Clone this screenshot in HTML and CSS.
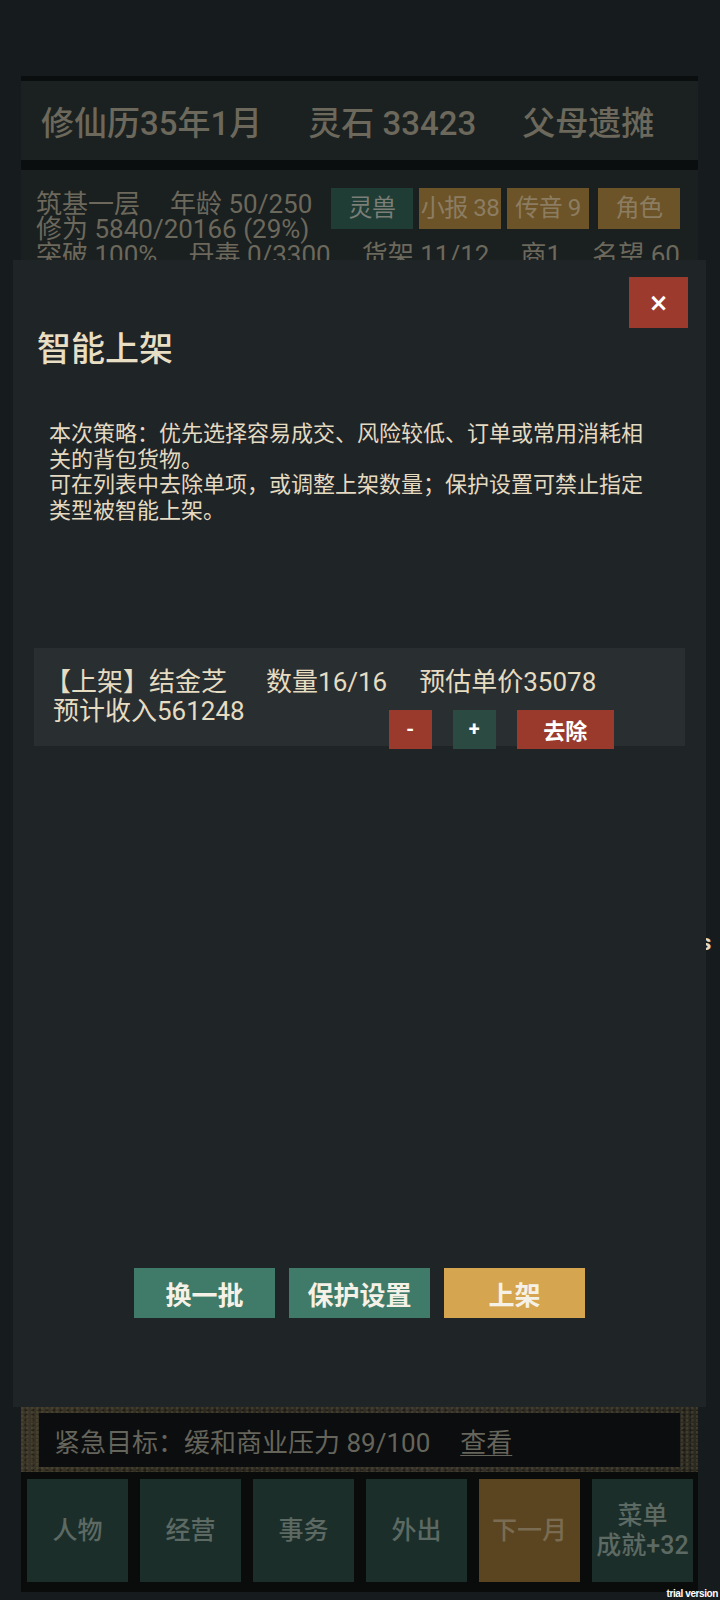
FILE: index.html
```html
<!DOCTYPE html>
<html lang="zh-CN">
  <head>
    <meta charset="UTF-8" />
    <meta name="viewport" content="width=720, initial-scale=1.0" />
    <title>智能上架</title>
    <link rel="stylesheet" href="styles.css">
  </head>
  <body>
    <div class="screen">
      <header class="top-bar">
        <span>修仙历35年1月</span>
        <span>灵石 33423</span>
        <span>父母遗摊</span>
      </header>
      <div class="top-sep"></div>

      <section class="status">
        <div class="status-top">
          <div class="status-lines">
            <div><span class="gap">筑基一层</span>年龄 50/250</div>
            <div>修为 5840/20166 (29%)</div>
          </div>
          <div class="status-btns">
            <div class="sbtn green">灵兽</div>
            <div class="sbtn brown">小报 38</div>
            <div class="sbtn brown">传音 9</div>
            <div class="sbtn brown wide-gap">角色</div>
          </div>
        </div>
        <div class="status-line3">
          <span>突破 100%</span>
          <span>丹毒 0/3300</span>
          <span>货架 11/12</span>
          <span>商1</span>
          <span>名望 60</span>
        </div>
      </section>

      <div class="goal">
        <div class="goal-inner">紧急目标：缓和商业压力 89/100<span class="goal-link">查看</span></div>
      </div>

      <nav class="nav">
        <div class="nav-btn">人物</div>
        <div class="nav-btn">经营</div>
        <div class="nav-btn">事务</div>
        <div class="nav-btn">外出</div>
        <div class="nav-btn next">下一月</div>
        <div class="nav-btn">菜单<br />成就+32</div>
      </nav>
    </div>

    <div class="stray">s</div>

    <!-- 智能上架 弹窗 -->
    <div class="modal">
      <button class="close-btn">×</button>
      <h1 class="modal-title">智能上架</h1>
      <p class="modal-desc">本次策略：优先选择容易成交、风险较低、订单或常用消耗相关的背包货物。<br />可在列表中去除单项，或调整上架数量；保护设置可禁止指定类型被智能上架。</p>

      <div class="item-list">
        <div class="item">
          <div class="item-line">
            <span class="item-part first">【上架】结金芝</span>
            <span class="item-part">数量16/16</span>
            <span>预估单价35078</span>
          </div>
          <div class="item-line second">
            <span>预计收入561248</span>
            <div class="item-btns">
              <button class="ibtn red small">-</button>
              <button class="ibtn green small">+</button>
              <button class="ibtn red">去除</button>
            </div>
          </div>
        </div>
      </div>

      <div class="modal-footer">
        <button class="fbtn green">换一批</button>
        <button class="fbtn green">保护设置</button>
        <button class="fbtn gold">上架</button>
      </div>
    </div>

    <div class="trial">trial version</div>
  </body>
</html>
```

FILE: styles.css
```css
/* Reset some default styles */
* {
  margin: 0;
  padding: 0;
  box-sizing: border-box;
}

body {
  font-family: Roboto, "Noto Sans CJK SC", sans-serif;
  background-color: #161b1e;
  width: 720px;
  height: 1600px;
  overflow: hidden;
  position: relative;
}

.screen {
  margin: 0 22px 0 21px;
  padding-top: 76px;
}

/* top bar */
.top-bar {
  height: 84px;
  border-top: 5px solid #0b0e0f;
  background-color: #1b2120;
  display: flex;
  align-items: center;
  gap: 46px;
  padding-left: 20px;
  font-size: 33px;
  font-weight: 500;
  color: #6c685c;
  white-space: nowrap;
}

.top-sep {
  height: 10px;
  background-color: #0b0e0f;
}

/* status panel (behind the modal) */
.status {
  height: 1237px;
  background-color: #1a1f1f;
  padding: 18px 18px 0 15px;
  font-size: 26px;
  line-height: 25px;
  color: #6c685c;
}

.status-top {
  display: flex;
  justify-content: space-between;
}

.status-lines {
  padding-top: 4px;
  white-space: nowrap;
}

.gap {
  margin-right: 30px;
}

.status-btns {
  display: flex;
  gap: 6px;
}

.sbtn {
  width: 82px;
  height: 41px;
  display: flex;
  align-items: center;
  justify-content: center;
  font-size: 24px;
  white-space: nowrap;
  letter-spacing: -0.5px;
}

.sbtn.green {
  background-color: #1f3c35;
  color: #7b7f78;
}

.sbtn.brown {
  background-color: #6c5428;
  color: #8c7d62;
}

.sbtn.wide-gap {
  margin-left: 3px;
}

.status-line3 {
  display: flex;
  justify-content: space-between;
  margin-top: 1px;
  white-space: nowrap;
}

/* urgent goal */
.goal {
  height: 65px;
  padding: 6px 18px 5px 18px;
  background-color: #2e2b22;
  background-image:
    radial-gradient(circle at 20% 30%, rgba(90, 80, 55, 0.45) 0 1px, transparent 2px),
    radial-gradient(circle at 70% 60%, rgba(15, 14, 10, 0.5) 0 1px, transparent 2px),
    linear-gradient(90deg, #3a3528, #2a2820 30%, #34302a 60%, #2b2a22);
  background-size: 5px 4px, 7px 5px, 100% 100%;
}

.goal-inner {
  height: 54px;
  background-color: #0b0d0e;
  display: flex;
  align-items: center;
  padding-left: 15px;
  font-size: 26px;
  color: #66655c;
  white-space: nowrap;
}

.goal-link {
  margin-left: 30px;
  text-decoration: underline;
  text-decoration-thickness: 1px;
  text-underline-offset: 3px;
}

/* bottom nav */
.nav {
  height: 120px;
  background-color: #0a0c0c;
  padding: 7px 5px 10px 6px;
  display: grid;
  grid-template-columns: repeat(6, 101px);
  gap: 12px;
}

.nav-btn {
  background-color: #1b2e29;
  color: #5d6963;
  font-size: 25px;
  font-weight: 500;
  line-height: 30px;
  display: flex;
  align-items: center;
  justify-content: center;
  text-align: center;
  white-space: nowrap;
}

.nav-btn.next {
  background-color: #5a4520;
  color: #7a6c52;
}

.stray {
  position: absolute;
  left: 700px;
  top: 930px;
  font-size: 22px;
  font-weight: bold;
  color: #e4dac2;
}

/* modal */
.modal {
  position: absolute;
  left: 13px;
  top: 260px;
  width: 693px;
  height: 1147px;
  background-color: #1f2426;
  display: flex;
  flex-direction: column;
  padding: 67px 0 89px 0;
  z-index: 10;
}

.close-btn {
  position: absolute;
  top: 17px;
  right: 18px;
  width: 59px;
  height: 51px;
  border: none;
  background-color: #9c3a2d;
  color: #fff;
  font-family: "DejaVu Sans", sans-serif;
  font-size: 24px;
  font-weight: bold;
}

.modal-title {
  padding-left: 24px;
  font-size: 34px;
  line-height: 44px;
  font-weight: 500;
  color: #e8dec4;
}

.modal-desc {
  margin-top: 50px;
  padding-left: 36px;
  width: 650px;
  font-size: 22px;
  line-height: 25.7px;
  color: #e4dac2;
}

.item-list {
  flex: 1;
  margin-top: 124px;
  padding: 0 21px;
}

.item {
  height: 98px;
  background-color: #292e30;
  padding: 20px 0 0 19px;
  font-size: 26px;
  line-height: 29px;
  color: #e6dcc2;
  white-space: nowrap;
}

.item-line {
  display: flex;
}

.item-part {
  margin-right: 32px;
}

.item-part.first {
  margin-left: -8px;
  margin-right: 39px;
}

.item-line.second {
  height: 29px;
  align-items: flex-start;
}

.item-btns {
  display: flex;
  margin-left: 144px;
  margin-top: 13px;
}

.ibtn {
  height: 39px;
  width: 97px;
  border: none;
  color: #fff;
  font-family: Roboto, "Noto Sans CJK SC", sans-serif;
  font-size: 22px;
  font-weight: bold;
  margin-right: 21px;
}

.ibtn.small {
  width: 43px;
  font-size: 20px;
}

.ibtn.red {
  background-color: #9a3a2c;
}

.ibtn.green {
  background-color: #2b4a42;
}

.modal-footer {
  display: flex;
  justify-content: center;
  gap: 14px;
}

.fbtn {
  width: 141px;
  height: 50px;
  border: none;
  color: #f6f1e6;
  font-family: Roboto, "Noto Sans CJK SC", sans-serif;
  font-size: 26px;
  font-weight: bold;
}

.fbtn.green {
  background-color: #3f7b68;
}

.fbtn.gold {
  background-color: #d5a54f;
}

.trial {
  position: absolute;
  right: 2px;
  bottom: 1px;
  font-family: "Liberation Sans", sans-serif;
  font-size: 10px;
  font-weight: bold;
  letter-spacing: -0.4px;
  color: #fff;
}
```
